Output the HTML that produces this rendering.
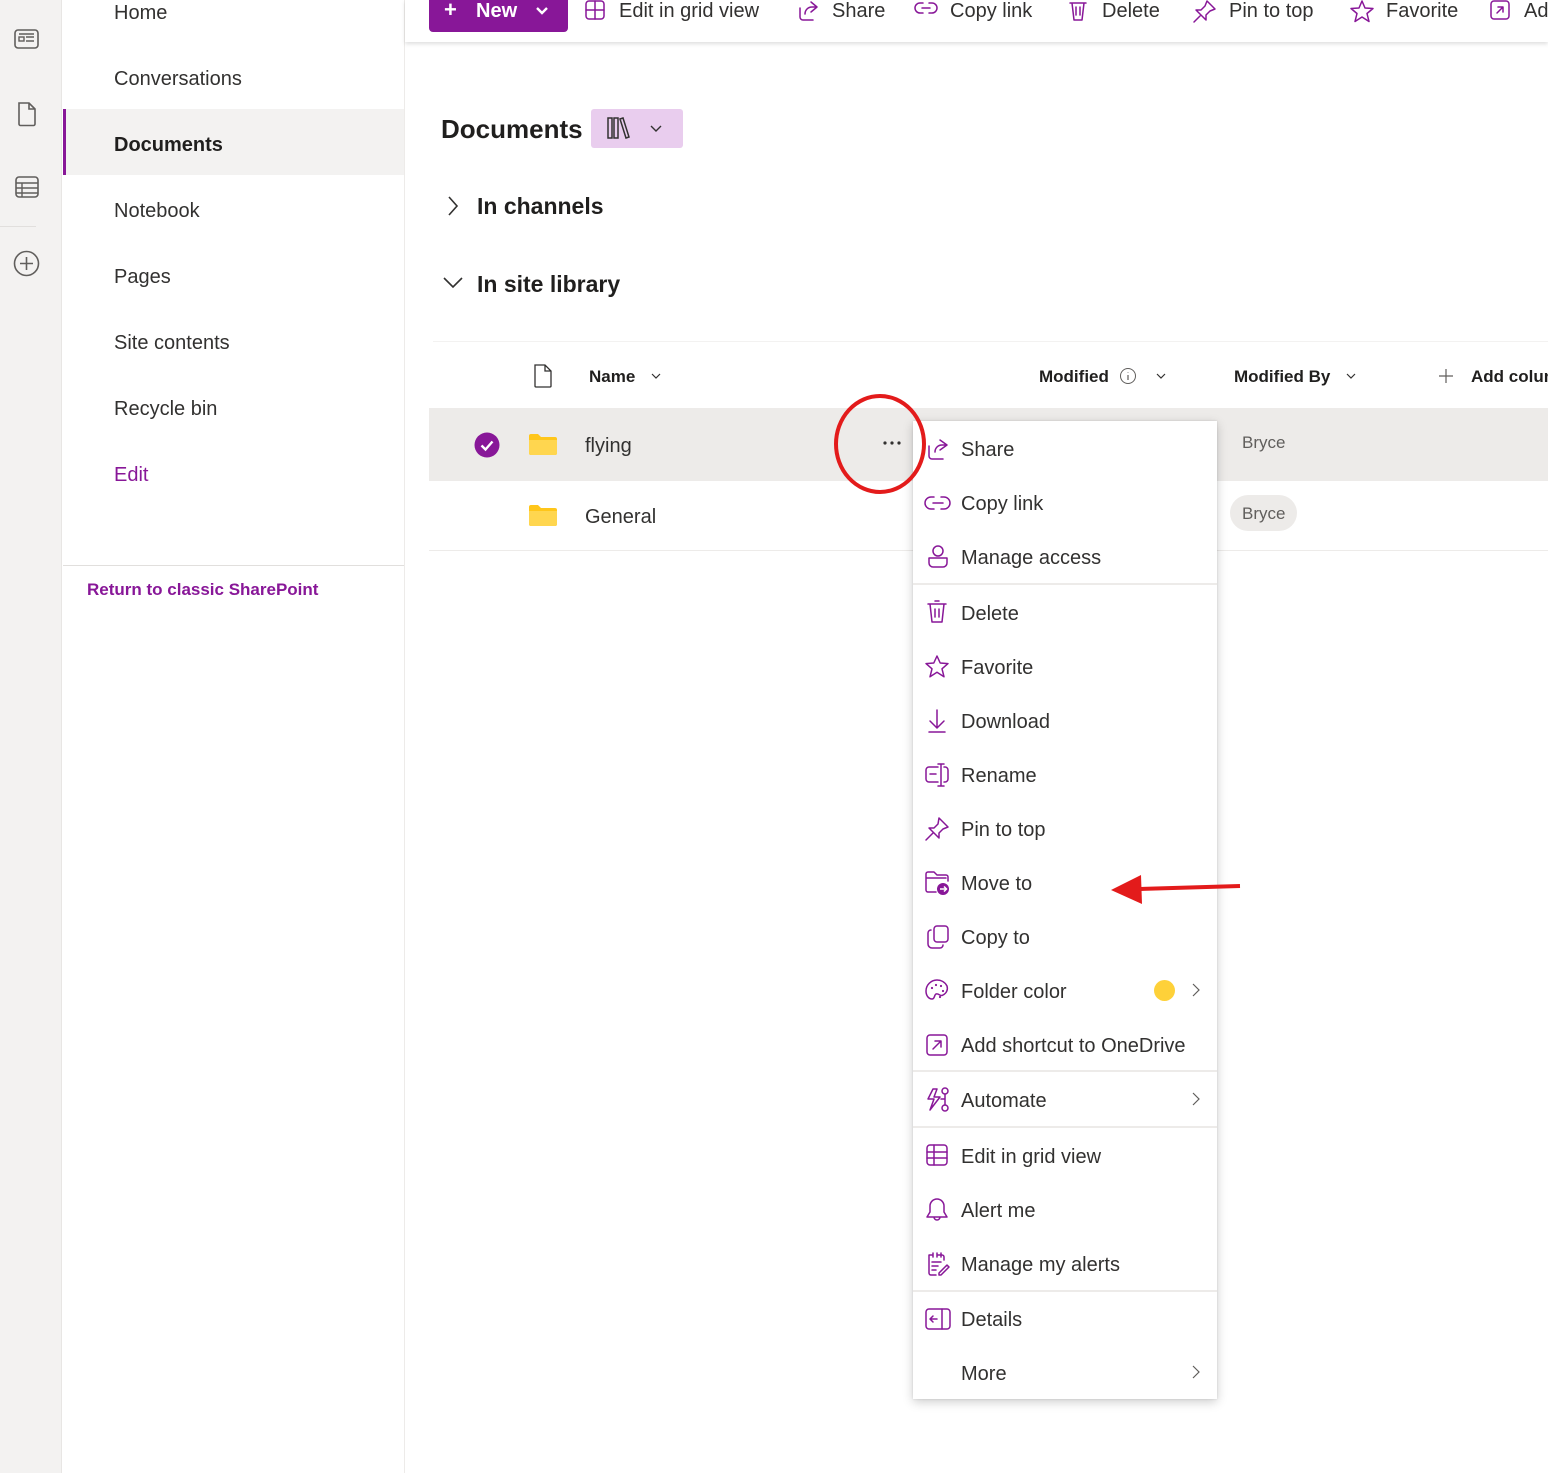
<!DOCTYPE html>
<html><head><meta charset="utf-8">
<style>
*{margin:0;padding:0;box-sizing:border-box}
body{width:1548px;height:1473px;position:relative;overflow:hidden;background:#fff;font-family:"Liberation Sans",sans-serif;color:#323130}
.a{position:absolute;white-space:nowrap}
.rail{left:0;top:0;width:62px;height:1473px;background:#f3f2f1;border-right:1px solid #e8e6e4}
.nav{left:63px;top:0;width:342px;height:1473px;background:#fff;border-right:1px solid #edebe9}
.ni{font-size:20px;left:114px;color:#323130;margin-top:2px}
.cmd{left:405px;top:0;width:1143px;height:42px;background:#fff;box-shadow:0 2px 4px rgba(0,0,0,.13)}
.ct{font-size:20px;color:#323130;top:0px}
svg{position:absolute;overflow:visible}
.menu{left:913px;top:421px;width:304px;height:978px;background:#fff;box-shadow:0 3px 10px rgba(0,0,0,.2),0 0 2px rgba(0,0,0,.12)}
.mi{font-size:20px;left:961px;color:#323130;margin-top:2px}
.sep{left:913px;width:304px;height:2px;background:#edebe9}
.p{fill:none;stroke:#881798;stroke-width:1.5;stroke-linecap:round;stroke-linejoin:round}
</style></head><body>
<div class="a rail"></div>
<svg style="left:14px;top:28px" width="26" height="22" viewBox="0 0 26 22"><rect x="1" y="2" width="23" height="18" rx="3" fill="none" stroke="#605e5c" stroke-width="1.6"/><rect x="5" y="9" width="5" height="4" fill="none" stroke="#605e5c" stroke-width="1.4"/><path d="M12 9h8M12 13h8M5 6h15" stroke="#605e5c" stroke-width="1.4"/></svg>
<svg style="left:17px;top:101px" width="20" height="26" viewBox="0 0 20 26"><path d="M2 2h10l6 6v15a1.5 1.5 0 0 1-1.5 1.5h-13A1.5 1.5 0 0 1 2 23z M12 2v6h6" fill="none" stroke="#605e5c" stroke-width="1.6"/></svg>
<svg style="left:14px;top:175px" width="26" height="24" viewBox="0 0 26 24"><rect x="2" y="2" width="22" height="20" rx="3" fill="none" stroke="#605e5c" stroke-width="1.6"/><path d="M2 8h22M2 13h22M2 18h22M8 8v14" stroke="#605e5c" stroke-width="1.4"/></svg>
<div class="a" style="left:0;top:226px;width:36px;height:1px;background:#e1dfdd"></div>
<svg style="left:13px;top:250px" width="27" height="27" viewBox="0 0 27 27"><circle cx="13.5" cy="13.5" r="12" fill="none" stroke="#605e5c" stroke-width="1.6"/><path d="M13.5 7v13M7 13.5h13" stroke="#605e5c" stroke-width="1.6"/></svg>

<div class="a nav"></div>
<div class="a" style="left:63px;top:109px;width:341px;height:66px;background:#f3f2f1;border-left:3px solid #881798"></div>
<div class="a ni" style="top:0px">Home</div>
<div class="a ni" style="top:66px">Conversations</div>
<div class="a ni" style="top:132px;font-weight:bold;color:#201f1e">Documents</div>
<div class="a ni" style="top:198px">Notebook</div>
<div class="a ni" style="top:264px">Pages</div>
<div class="a ni" style="top:330px">Site contents</div>
<div class="a ni" style="top:396px">Recycle bin</div>
<div class="a ni" style="top:462px;color:#881798">Edit</div>
<div class="a" style="left:63px;top:565px;width:341px;height:1px;background:#e1dfdd"></div>
<div class="a" style="left:87px;top:580px;font-size:17px;font-weight:bold;color:#881798">Return to classic SharePoint</div>

<div class="a cmd"></div>
<div class="a" style="left:429px;top:-6px;width:139px;height:38px;background:#881798;border-radius:4px"></div>
<div class="a" style="left:444px;top:-3px;font-size:22px;color:#fff;font-weight:bold">+</div>
<div class="a" style="left:476px;top:0px;font-size:20px;color:#fff;font-weight:bold">New</div>
<svg style="left:535px;top:6px" width="14" height="10"><path d="M2 2l5 5 5-5" fill="none" stroke="#fff" stroke-width="2.4"/></svg>
<svg style="left:585px;top:0px" width="20" height="20"><rect x="1" y="1" width="18" height="18" rx="3" class="p"/><path d="M1 10h18M10 1v18" class="p"/></svg>
<div class="a ct" style="left:619px">Edit in grid view</div>
<svg style="left:797px;top:0" width="22" height="22"><path d="M14 2l6 5-6 5M20 7h-5c-4 0-7 3-7 7M3 8v9a3 3 0 0 0 3 3h10" class="p"/></svg>
<div class="a ct" style="left:832px">Share</div>
<svg style="left:914px;top:0" width="24" height="16"><path d="M9 3H6a5 5 0 0 0 0 10h3M15 3h3a5 5 0 0 1 0 10h-3M8 8h8" class="p"/></svg>
<div class="a ct" style="left:950px">Copy link</div>
<svg style="left:1068px;top:0" width="20" height="22"><path d="M2 3h16M4 3l2 17h8l2-17M8 7v8M12 7v8" class="p"/></svg>
<div class="a ct" style="left:1102px">Delete</div>
<svg style="left:1192px;top:0" width="24" height="24"><path d="M15 1l8 8-5 2-4 4 0 5-3-3-4-4-3-3 5 0 4-4z M2 22l6-6" class="p"/></svg>
<div class="a ct" style="left:1229px">Pin to top</div>
<svg style="left:1350px;top:0" width="24" height="22"><path d="M12 1l3 7 8 .5-6 5 2 8-7-4.5-7 4.5 2-8-6-5 8-.5z" class="p"/></svg>
<div class="a ct" style="left:1386px">Favorite</div>
<svg style="left:1490px;top:0" width="20" height="20"><rect x="1" y="1" width="18" height="18" rx="3" class="p"/><path d="M7 13l6-6M8 7h5v5" class="p"/></svg>
<div class="a ct" style="left:1524px">Ad</div>

<div class="a" style="left:441px;top:114px;font-size:26px;font-weight:bold;color:#201f1e">Documents</div>
<div class="a" style="left:591px;top:109px;width:92px;height:39px;background:#e9cdee;border-radius:3px"></div>
<svg style="left:606px;top:116px" width="26" height="24"><path d="M2 2h4v20H2zM8 2h4v20H8zM14 3l3-1 6 19-3 1z" fill="none" stroke="#323130" stroke-width="1.5"/></svg>
<svg style="left:649px;top:124px" width="14" height="10"><path d="M2 2l5 5 5-5" fill="none" stroke="#323130" stroke-width="1.4"/></svg>
<svg style="left:446px;top:195px" width="14" height="22"><path d="M3 2l8 9-8 9" fill="none" stroke="#323130" stroke-width="1.6"/></svg>
<div class="a" style="left:477px;top:193px;font-size:23px;font-weight:bold;color:#201f1e">In channels</div>
<svg style="left:442px;top:276px" width="22" height="14"><path d="M2 2l9 9 9-9" fill="none" stroke="#323130" stroke-width="1.6"/></svg>
<div class="a" style="left:477px;top:271px;font-size:23px;font-weight:bold;color:#201f1e">In site library</div>

<div class="a" style="left:433px;top:341px;width:1115px;height:1px;background:#f3f2f1"></div>
<svg style="left:533px;top:363px" width="20" height="26"><path d="M2 2h10l6 6v15a1 1 0 0 1-1 1H3a1 1 0 0 1-1-1z M12 2v6h6" fill="none" stroke="#323130" stroke-width="1.3"/></svg>
<div class="a" style="left:589px;top:367px;font-size:17px;font-weight:bold;color:#201f1e">Name</div>
<svg style="left:651px;top:372px" width="10" height="8"><path d="M1 2l4 4 4-4" fill="none" stroke="#323130" stroke-width="1.2"/></svg>
<div class="a" style="left:1039px;top:367px;font-size:17px;font-weight:bold;color:#201f1e">Modified</div>
<svg style="left:1119px;top:367px" width="18" height="18"><circle cx="9" cy="9" r="7.5" fill="none" stroke="#605e5c" stroke-width="1"/><path d="M9 8v5M9 5.5v.5" stroke="#605e5c" stroke-width="1.2"/></svg>
<svg style="left:1156px;top:372px" width="10" height="8"><path d="M1 2l4 4 4-4" fill="none" stroke="#323130" stroke-width="1.2"/></svg>
<div class="a" style="left:1234px;top:367px;font-size:17px;font-weight:bold;color:#201f1e">Modified By</div>
<svg style="left:1346px;top:372px" width="10" height="8"><path d="M1 2l4 4 4-4" fill="none" stroke="#323130" stroke-width="1.2"/></svg>
<svg style="left:1438px;top:368px" width="16" height="16"><path d="M8 1v14M1 8h14" stroke="#605e5c" stroke-width="1.2"/></svg>
<div class="a" style="left:1471px;top:367px;font-size:17px;font-weight:bold;color:#201f1e">Add column</div>

<div class="a" style="left:429px;top:408px;width:1119px;height:73px;background:#edebe9"></div>
<div class="a" style="left:429px;top:550px;width:1119px;height:1px;background:#edebe9"></div>
<svg style="left:474px;top:432px" width="26" height="26"><circle cx="13" cy="13" r="12.5" fill="#881798"/><path d="M7.5 13.5l4 4 7-8" fill="none" stroke="#fff" stroke-width="2.4"/></svg>
<svg style="left:529px;top:433px" width="28" height="22"><path d="M0 3a2 2 0 0 1 2-2h7l3 3h14a2 2 0 0 1 2 2v14a2 2 0 0 1-2 2H2a2 2 0 0 1-2-2z" fill="#ffc61a"/><path d="M0 7h28v13a2 2 0 0 1-2 2H2a2 2 0 0 1-2-2z" fill="#ffd64f"/></svg>
<svg style="left:529px;top:504px" width="28" height="22"><path d="M0 3a2 2 0 0 1 2-2h7l3 3h14a2 2 0 0 1 2 2v14a2 2 0 0 1-2 2H2a2 2 0 0 1-2-2z" fill="#ffc61a"/><path d="M0 7h28v13a2 2 0 0 1-2 2H2a2 2 0 0 1-2-2z" fill="#ffd64f"/></svg>
<div class="a" style="left:585px;top:435px;font-size:20px">flying</div>
<div class="a" style="left:585px;top:506px;font-size:20px">General</div>
<svg style="left:882px;top:440px" width="22" height="6"><circle cx="3" cy="3" r="1.6" fill="#323130"/><circle cx="10" cy="3" r="1.6" fill="#323130"/><circle cx="17" cy="3" r="1.6" fill="#323130"/></svg>
<div class="a" style="left:1242px;top:433px;font-size:17px;color:#605e5c">Bryce</div>
<div class="a" style="left:1230px;top:495px;width:67px;height:36px;border-radius:18px;background:#edebe9"></div>
<div class="a" style="left:1242px;top:504px;font-size:17px;color:#605e5c">Bryce</div>

<div class="a menu"></div>
<div class="a sep" style="top:583px"></div>
<div class="a sep" style="top:1070px"></div>
<div class="a sep" style="top:1126px"></div>
<div class="a sep" style="top:1290px"></div>

<div class="a mi" style="top:437px">Share</div>
<div class="a mi" style="top:491px">Copy link</div>
<div class="a mi" style="top:545px">Manage access</div>
<div class="a mi" style="top:601px">Delete</div>
<div class="a mi" style="top:655px">Favorite</div>
<div class="a mi" style="top:709px">Download</div>
<div class="a mi" style="top:763px">Rename</div>
<div class="a mi" style="top:817px">Pin to top</div>
<div class="a mi" style="top:871px">Move to</div>
<div class="a mi" style="top:925px">Copy to</div>
<div class="a mi" style="top:979px">Folder color</div>
<div class="a mi" style="top:1033px">Add shortcut to OneDrive</div>
<div class="a mi" style="top:1088px">Automate</div>
<div class="a mi" style="top:1144px">Edit in grid view</div>
<div class="a mi" style="top:1198px">Alert me</div>
<div class="a mi" style="top:1252px">Manage my alerts</div>
<div class="a mi" style="top:1307px">Details</div>
<div class="a mi" style="top:1361px">More</div>

<svg style="left:926px;top:438px" width="24" height="24"><path d="M14 2l7 5-7 5M21 7h-5c-4 0-7 3-7 7M3 8v10a3 3 0 0 0 3 3h11" class="p"/></svg>
<svg style="left:925px;top:495px" width="26" height="16"><path d="M9 2H6a6 6 0 0 0 0 12h3M16 2h3a6 6 0 0 1 0 12h-3M8 8h10" class="p"/></svg>
<svg style="left:927px;top:544px" width="22" height="26"><circle cx="11" cy="7" r="5" class="p"/><path d="M2 14h18v5a4 4 0 0 1-4 4H6a4 4 0 0 1-4-4z" class="p"/></svg>
<svg style="left:926px;top:600px" width="22" height="24"><path d="M2 4h18M4 4l2 18h10l2-18M9 1h4M9 9v8M13 9v8" class="p"/></svg>
<svg style="left:924px;top:654px" width="26" height="24"><path d="M13 2l3.2 7 7.8.6-6 5.2 2 8-7-4.5-7 4.5 2-8-6-5.2 7.8-.6z" class="p"/></svg>
<svg style="left:927px;top:708px" width="20" height="26"><path d="M10 2v18M3 13l7 7 7-7M2 24h16" class="p"/></svg>
<svg style="left:924px;top:762px" width="26" height="26"><path d="M14 5H5a3 3 0 0 0-3 3v9a3 3 0 0 0 3 3h9M20 5h1a3 3 0 0 1 3 3v9a3 3 0 0 1-3 3h-1M17 2v22M14 2h6M14 24h6M6 12h6" class="p"/></svg>
<svg style="left:924px;top:816px" width="26" height="26"><path d="M15 2l9 9-5 2-4 4 0 5-3-3-4-4-3-3 5 0 4-4z M2 24l7-7" class="p"/></svg>
<svg style="left:924px;top:870px" width="28" height="26"><path d="M2 4a2 2 0 0 1 2-2h6l3 3h9a2 2 0 0 1 2 2v4M2 4v16a2 2 0 0 0 2 2h8M2 8h20" class="p"/><circle cx="19" cy="19" r="6" fill="#881798"/><path d="M16 19h6M20 16.5l2.5 2.5-2.5 2.5" stroke="#fff" stroke-width="1.5" fill="none"/></svg>
<svg style="left:926px;top:924px" width="24" height="26"><rect x="8" y="2" width="14" height="16" rx="3" class="p"/><path d="M5 6a3 3 0 0 0-3 3v11a4 4 0 0 0 4 4h8a3 3 0 0 0 3-3" class="p"/></svg>
<svg style="left:924px;top:978px" width="26" height="26"><path d="M13 2C7 2 2 7 2 13c0 5 3 8 6 8 3 0 2-4 4-5 3-1 4 3 7 1 4-2 5-6 4-9C21 4 17 2 13 2z" class="p"/><circle cx="8" cy="10" r="1.1" fill="#881798"/><circle cx="12" cy="7" r="1.1" fill="#881798"/><circle cx="17" cy="8" r="1.1" fill="#881798"/><circle cx="19" cy="13" r="1.1" fill="#881798"/><circle cx="16" cy="19" r="1.1" fill="#881798"/></svg>
<div class="a" style="left:1154px;top:980px;width:21px;height:21px;border-radius:50%;background:#fed139"></div>
<svg style="left:1191px;top:982px" width="10" height="16"><path d="M2 2l6 6-6 6" fill="none" stroke="#605e5c" stroke-width="1.2"/></svg>
<svg style="left:926px;top:1034px" width="22" height="22"><rect x="1" y="1" width="20" height="20" rx="3" class="p"/><path d="M7 15l8-8M9 7h6v6" class="p"/></svg>
<svg style="left:924px;top:1087px" width="28" height="26"><path d="M9 2L4 12h6l-4 11 10-13h-6l3-8z" class="p"/><circle cx="21" cy="4" r="3" class="p"/><circle cx="21" cy="21" r="3" class="p"/><path d="M21 7v11M21 12h-4" class="p"/></svg>
<svg style="left:1191px;top:1091px" width="10" height="16"><path d="M2 2l6 6-6 6" fill="none" stroke="#605e5c" stroke-width="1.2"/></svg>
<svg style="left:926px;top:1144px" width="22" height="22"><rect x="1" y="1" width="20" height="20" rx="3" class="p"/><path d="M1 8h20M1 14h20M8 1v20" class="p"/></svg>
<svg style="left:926px;top:1197px" width="22" height="26"><path d="M11 2a7 7 0 0 0-7 7v6l-3 5h20l-3-5V9a7 7 0 0 0-7-7zM8 20a3 3 0 0 0 6 0" class="p"/></svg>
<svg style="left:926px;top:1251px" width="24" height="26"><path d="M12 4h4a2 2 0 0 1 2 2v3M6 4H3v18a2 2 0 0 0 2 2h5M7 2v4M11 2v4M15 2v4M6 11h9M6 15h6M6 19h4M13 22l8-8 2 2-8 8h-2z" class="p"/></svg>
<svg style="left:925px;top:1308px" width="26" height="22"><rect x="1" y="1" width="24" height="20" rx="3" class="p"/><path d="M17 1v20M12 11H5M8 8l-3 3 3 3" class="p"/></svg>
<svg style="left:1191px;top:1364px" width="10" height="16"><path d="M2 2l6 6-6 6" fill="none" stroke="#605e5c" stroke-width="1.2"/></svg>

<svg style="left:0;top:0" width="1548" height="1473"><ellipse cx="880" cy="444" rx="44" ry="48" fill="none" stroke="#e31b1b" stroke-width="4"/><path d="M1240 886L1140 889" stroke="#e31b1b" stroke-width="4"/><path d="M1111 890L1141 875L1142 904z" fill="#e31b1b"/></svg>
</body></html>
